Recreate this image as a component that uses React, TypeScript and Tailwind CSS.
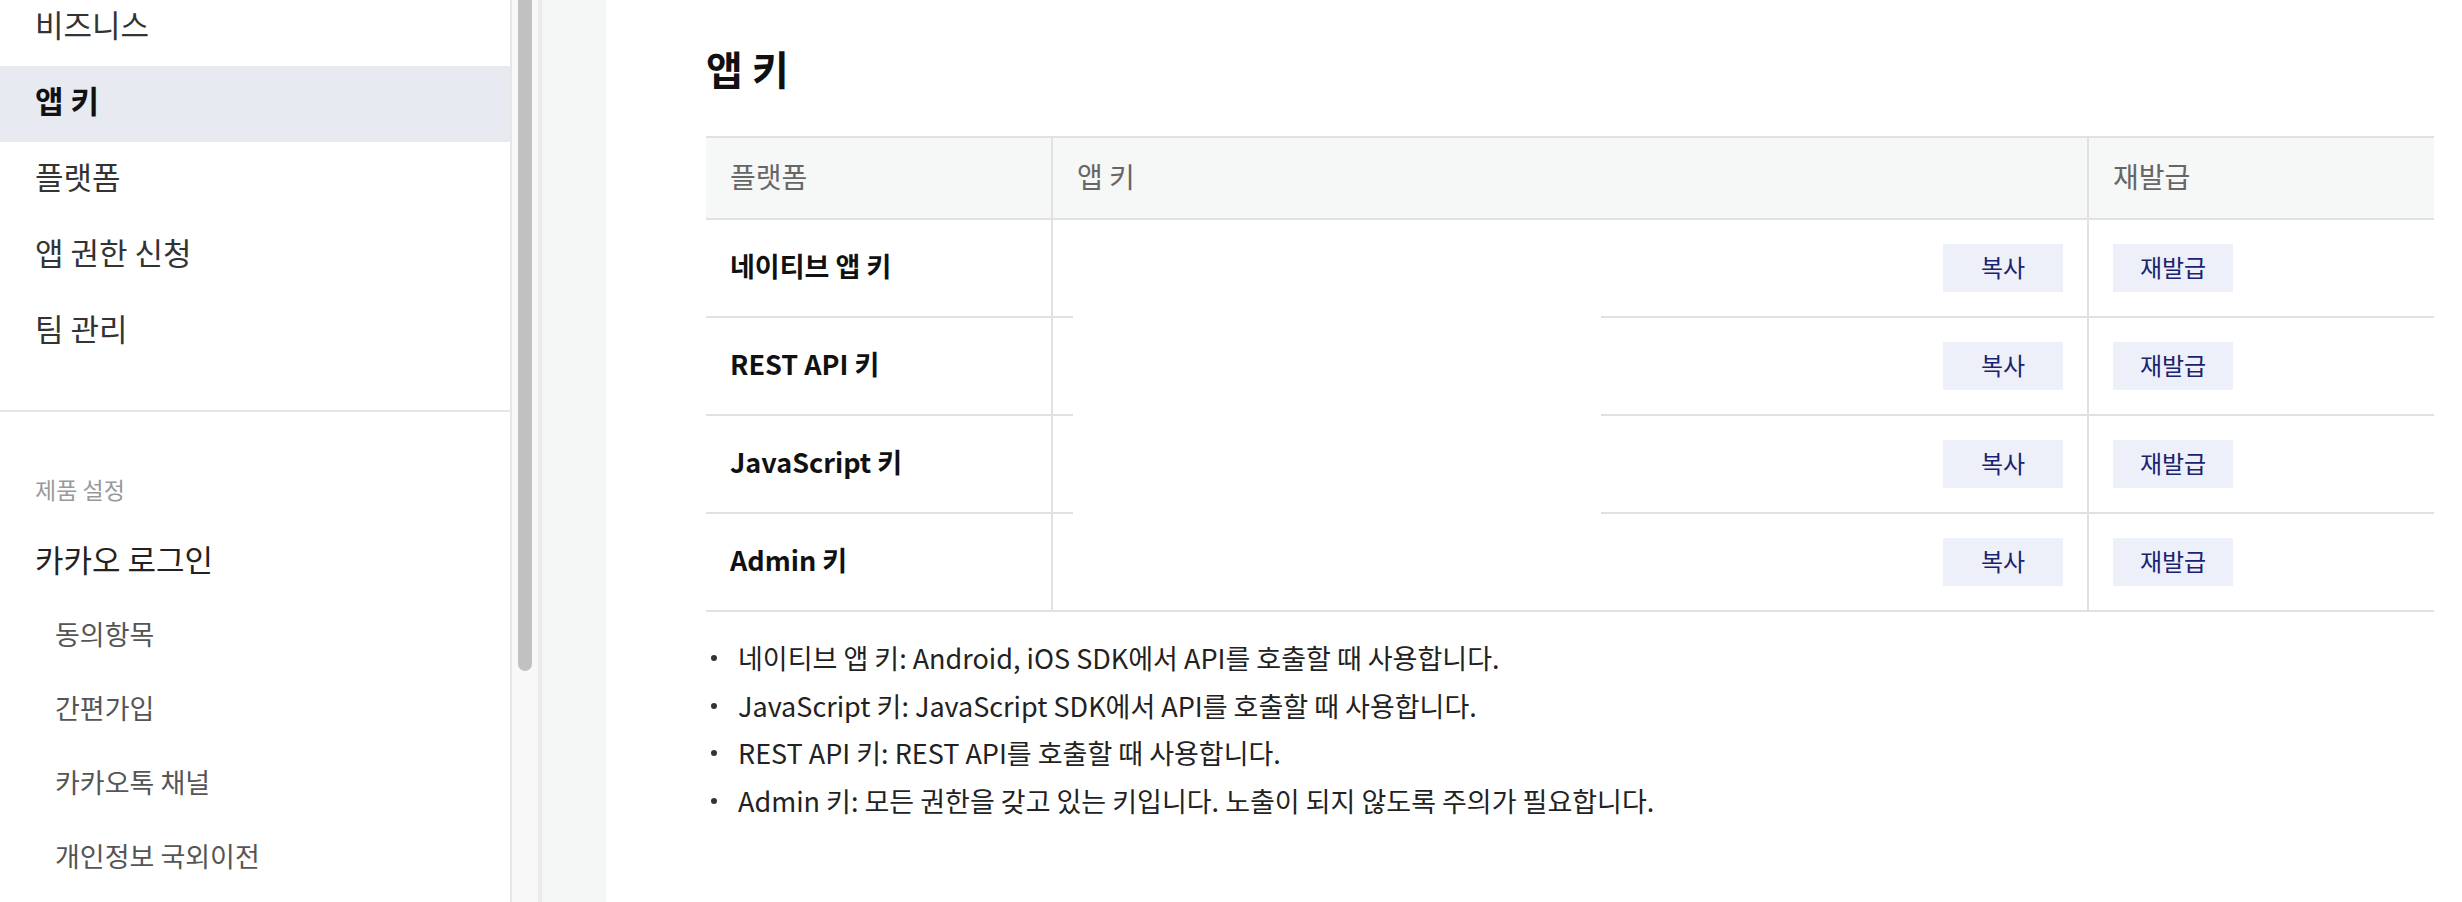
import React from "react";

const topItems = ["비즈니스", "앱 키", "플랫폼", "앱 권한 신청", "팀 관리"];
const subItems = ["동의항목", "간편가입", "카카오톡 채널", "개인정보 국외이전"];
const rows = ["네이티브 앱 키", "REST API 키", "JavaScript 키", "Admin 키"];
const notes = [
  "네이티브 앱 키: Android, iOS SDK에서 API를 호출할 때 사용합니다.",
  "JavaScript 키: JavaScript SDK에서 API를 호출할 때 사용합니다.",
  "REST API 키: REST API를 호출할 때 사용합니다.",
  "Admin 키: 모든 권한을 갖고 있는 키입니다. 노출이 되지 않도록 주의가 필요합니다.",
];

function Sidebar() {
  return (
    <aside className="w-[512px] shrink-0 border-r-2 border-[#e6e6e6] bg-white">
      <div className="-mt-[10px]">
        {topItems.map((t) => {
          const active = t === "앱 키";
          return (
            <div
              key={t}
              className={
                active
                  ? "flex h-[76px] items-center bg-[#e7eaf1] pb-[7px] pl-[35px] text-[31px] font-bold text-[#111111]"
                  : "flex h-[76px] items-center pb-[7px] pl-[35px] text-[31px] text-[#333333]"
              }
            >
              {t}
            </div>
          );
        })}
      </div>
      <div className="mt-[40px] border-t-2 border-[#e6e6e6]" />
      <div className="flex h-[112px] items-end pb-[22px] pl-[35px] text-[23px] leading-[26px] text-[#999999]">
        제품 설정
      </div>
      <div className="flex h-[76px] items-center pb-[5px] pl-[35px] text-[31px] text-[#222222]">
        카카오 로그인
      </div>
      {subItems.map((t) => (
        <div
          key={t}
          className="flex h-[74px] items-center pb-[6px] pl-[55px] text-[27px] text-[#555555]"
        >
          {t}
        </div>
      ))}
    </aside>
  );
}

function Scrollbar() {
  return (
    <div className="flex shrink-0">
      <div className="w-[26px] bg-[#f8f8f8] px-[6px]">
        <div className="h-[671px] rounded-b-full bg-[#c1c1c1]" />
      </div>
      <div className="w-[4px] bg-[#ebebeb]" />
      <div className="w-[64px] bg-[#f5f6f6]" />
    </div>
  );
}

function Button({ label }: { label: string }) {
  return (
    <button className="flex h-[48px] w-[120px] items-center justify-center pb-[2px] bg-[#eef0f9] text-[24px] text-[#1a2370]">
      {label}
    </button>
  );
}

function KeyTable() {
  return (
    <div className="relative border-y-2 border-[#e1e1e1]">
      <div className="grid h-[82px] grid-cols-[345px_1036px_1fr] border-b-2 border-[#e1e1e1] bg-[#f6f7f7] text-[28px] text-[#666666]">
        <div className="flex items-center pb-[4px] px-[24px]">플랫폼</div>
        <div className="flex items-center border-l-2 border-[#e1e1e1] pb-[4px] px-[24px]">앱 키</div>
        <div className="flex items-center border-l-2 border-[#e1e1e1] pb-[4px] px-[24px]">재발급</div>
      </div>
      {rows.map((r, i) => (
        <div
          key={r}
          className={
            i < rows.length - 1
              ? "grid h-[98px] grid-cols-[345px_1036px_1fr] border-b-2 border-[#e1e1e1]"
              : "grid h-[96px] grid-cols-[345px_1036px_1fr]"
          }
        >
          <div className="flex items-center pb-[4px] px-[24px] text-[27px] font-bold text-[#111111]">
            {r}
          </div>
          <div className="flex items-center justify-end border-l-2 border-[#e1e1e1] px-[24px]">
            <Button label="복사" />
          </div>
          <div className="flex items-center border-l-2 border-[#e1e1e1] px-[24px]">
            <Button label="재발급" />
          </div>
        </div>
      ))}
      <div className="absolute left-[367px] top-[120px] h-[340px] w-[528px] bg-white" />
    </div>
  );
}

export default function App() {
  return (
    <div className="flex h-[902px] w-[2462px] overflow-hidden bg-white font-['Noto_Sans_CJK_KR','Noto_Sans',sans-serif]">
      <Sidebar />
      <Scrollbar />
      <main className="flex-1 bg-white pl-[100px] pr-[28px] pt-[42px]">
        <h1 className="mb-[41px] text-[40px] font-bold leading-[53px] text-[#111111]">앱 키</h1>
        <KeyTable />
        <ul className="mt-[24px]">
          {notes.map((n) => (
            <li key={n} className="flex h-[47.5px] items-center pb-[3px] text-[27px] text-[#222222]">
              <span className="ml-[5px] mr-[21px] h-[6px] w-[6px] shrink-0 rounded-full bg-[#333333]" />
              {n}
            </li>
          ))}
        </ul>
      </main>
    </div>
  );
}
